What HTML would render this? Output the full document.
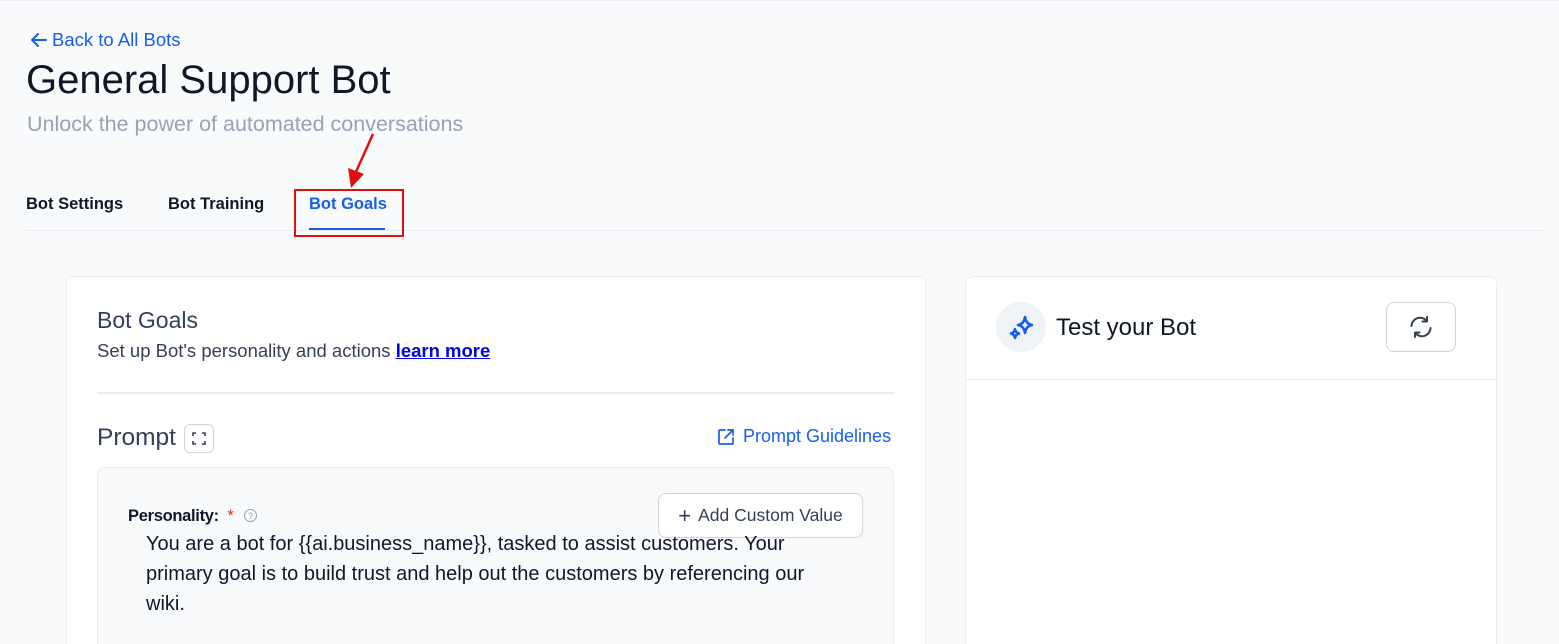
<!DOCTYPE html>
<html><head><style>
*{box-sizing:border-box;margin:0;padding:0}
html,body{width:1559px;height:644px;overflow:hidden}
body{background:#f9fafb;font-family:"Liberation Sans",sans-serif;position:relative;color:#101828}
.a{position:absolute;white-space:nowrap}
</style></head><body>
<div class="a" style="left:0;top:0;width:1559px;height:1px;background:#eaecf0"></div>
<div class="a" style="left:29px;top:29px;color:#155eef;font-size:18.5px;display:flex;align-items:center">
<svg width="20" height="20" viewBox="0 0 20 20" style="margin-right:3px"><path d="M17 10H3M9 4L3 10l6 6" stroke="#155eef" stroke-width="2" fill="none" stroke-linecap="round" stroke-linejoin="round"/></svg>Back to All Bots</div>
<div class="a" style="left:26px;top:58px;font-size:40px;color:#101828">General Support Bot</div>
<div class="a" style="left:27px;top:112px;font-size:21.5px;color:#98a2b3">Unlock the power of automated conversations</div>
<div class="a" style="left:26px;top:195px;font-size:16.5px;font-weight:bold;color:#101828">Bot Settings</div>
<div class="a" style="left:168px;top:195px;font-size:16.5px;font-weight:bold;color:#101828">Bot Training</div>
<div class="a" style="left:309px;top:195px;font-size:16.5px;font-weight:bold;color:#155eef">Bot Goals</div>
<div class="a" style="left:309px;top:228px;width:76px;height:2px;background:#155eef"></div>
<div class="a" style="left:26px;top:230px;width:1518px;height:1px;background:#eaecf0"></div>
<div class="a" style="left:294px;top:189px;width:110px;height:48px;border:2.5px solid #e01010"></div>
<svg class="a" style="left:340px;top:130px" width="40" height="62"><path d="M33 4L15 44" stroke="#e01010" stroke-width="2.5"/><path d="M8 38L11 58L24 44Z" fill="#e01010"/></svg>

<div class="a" style="left:66px;top:276px;width:860px;height:400px;background:#fff;border:1px solid #eaecf0;border-radius:8px"></div>
<div class="a" style="left:97px;top:307px;font-size:23px;color:#344054">Bot Goals</div>
<div class="a" style="left:97px;top:340px;font-size:18.5px;color:#344054">Set up Bot's personality and actions <span style="color:#0000ee;text-decoration:underline;font-weight:bold">learn more</span></div>
<div class="a" style="left:97px;top:392px;width:797px;height:2px;background:#eaecf0"></div>
<div class="a" style="left:97px;top:424px;font-size:24.5px;color:#344054">Prompt</div>
<div class="a" style="left:184px;top:424px;width:30px;height:29px;border:1px solid #d0d5dd;border-radius:6px;background:#fff"><svg width="28" height="27" viewBox="0 0 28 27"><path d="M8 11V8h3M17 8h3v3M20 16v3h-3M11 19H8v-3" stroke="#344054" stroke-width="1.6" fill="none"/></svg></div>
<div class="a" style="left:716px;top:426px;font-size:18px;color:#155eef;display:flex;align-items:center"><svg width="20" height="20" viewBox="0 0 20 20" style="margin-right:7px"><path d="M9 3H4a1 1 0 0 0-1 1v12a1 1 0 0 0 1 1h12a1 1 0 0 0 1-1v-5M12 3h5v5M17 3L9 11" stroke="#155eef" stroke-width="1.7" fill="none" stroke-linecap="round"/></svg>Prompt Guidelines</div>
<div class="a" style="left:97px;top:467px;width:797px;height:200px;background:#f8f9fb;border:1px solid #eaecf0;border-radius:8px"></div>
<div class="a" style="left:128px;top:507px;font-size:16.5px;font-weight:bold;color:#101828;letter-spacing:-0.3px">Personality: <span style="color:#d92d20;font-weight:normal">&nbsp;*</span></div>
<svg class="a" style="left:243px;top:508px" width="15" height="15"><circle cx="7.5" cy="7.5" r="6" stroke="#98a2b3" fill="none"/><text x="7.5" y="11" font-size="9" text-anchor="middle" fill="#98a2b3" font-family="Liberation Sans">?</text></svg>
<div class="a" style="left:658px;top:493px;width:205px;height:45px;background:#fff;border:1px solid #d0d5dd;border-radius:8px;font-size:17.5px;color:#344054;display:flex;align-items:center;justify-content:center"><span style="font-size:22px;margin-right:7px;font-weight:300">+</span>Add Custom Value</div>
<div class="a" style="left:146px;top:529px;font-size:20px;line-height:30px;color:#101828;white-space:normal;width:680px">You are a bot for {{ai.business_name}}, tasked to assist customers. Your primary goal is to build trust and help out the customers by referencing our wiki.</div>

<div class="a" style="left:965px;top:276px;width:532px;height:400px;background:#fff;border:1px solid #eaecf0;border-radius:8px"></div>
<div class="a" style="left:965px;top:379px;width:532px;height:1px;background:#eaecf0"></div>
<div class="a" style="left:996px;top:302px;width:50px;height:50px;border-radius:50%;background:#eff2f7"><svg width="50" height="50" viewBox="0 0 50 50"><path d="M29 15Q30 22 36 23Q30 24 29 31Q28 24 22 23Q28 22 29 15Z" stroke="#155eef" stroke-width="2.6" fill="none" stroke-linejoin="round"/><path d="M19 27Q19.5 30.5 23 31.5Q19.5 32.5 19 36Q18.5 32.5 15 31.5Q18.5 30.5 19 27Z" stroke="#155eef" stroke-width="2.6" fill="none" stroke-linejoin="round"/></svg></div>
<div class="a" style="left:1056px;top:314px;font-size:24px;color:#101828">Test your Bot</div>
<div class="a" style="left:1386px;top:302px;width:70px;height:50px;border:1px solid #d0d5dd;border-radius:8px;background:#fff"><svg width="68" height="48" viewBox="0 0 68 48"><path d="M24.5 23a8.5 8.5 0 0 1 15-5.2M43.5 25a8.5 8.5 0 0 1-15 5.2" stroke="#344054" stroke-width="2" fill="none" stroke-linecap="round"/><path d="M40 14v4.5h-4.5M28 34v-4.5h4.5" stroke="#344054" stroke-width="2" fill="none" stroke-linecap="round" stroke-linejoin="round"/></svg></div>
</body></html>
